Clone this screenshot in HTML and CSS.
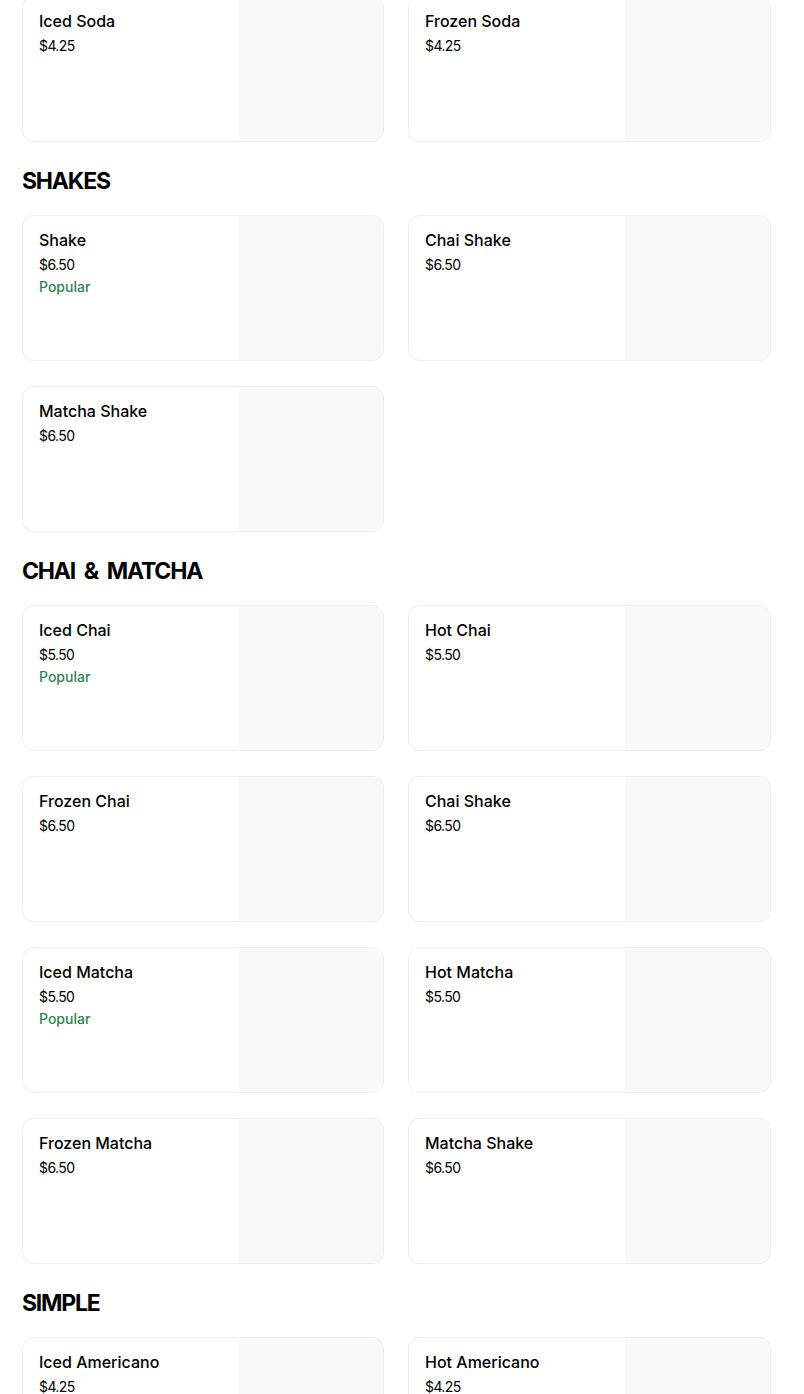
FILE: index.html
```html
<!DOCTYPE html>
<html lang="en">
<head>
<meta charset="utf-8">
<title>Menu</title>
<link rel="stylesheet" href="styles.css">
</head>
<body>
<main class="menu">
  <section class="section">
    <div class="grid">
      <div class="card"><div class="info"><div class="name">Iced Soda</div><div class="price">$4.25</div></div><div class="photo"></div></div>
      <div class="card"><div class="info"><div class="name">Frozen Soda</div><div class="price">$4.25</div></div><div class="photo"></div></div>
    </div>
  </section>
  <section class="section">
    <h2 class="heading">SHAKES</h2>
    <div class="grid">
      <div class="card"><div class="info"><div class="name">Shake</div><div class="price">$6.50</div><div class="tag">Popular</div></div><div class="photo"></div></div>
      <div class="card"><div class="info"><div class="name">Chai Shake</div><div class="price">$6.50</div></div><div class="photo"></div></div>
      <div class="card"><div class="info"><div class="name">Matcha Shake</div><div class="price">$6.50</div></div><div class="photo"></div></div>
    </div>
  </section>
  <section class="section">
    <h2 class="heading">CHAI &amp; MATCHA</h2>
    <div class="grid">
      <div class="card"><div class="info"><div class="name">Iced Chai</div><div class="price">$5.50</div><div class="tag">Popular</div></div><div class="photo"></div></div>
      <div class="card"><div class="info"><div class="name">Hot Chai</div><div class="price">$5.50</div></div><div class="photo"></div></div>
      <div class="card"><div class="info"><div class="name">Frozen Chai</div><div class="price">$6.50</div></div><div class="photo"></div></div>
      <div class="card"><div class="info"><div class="name">Chai Shake</div><div class="price">$6.50</div></div><div class="photo"></div></div>
      <div class="card"><div class="info"><div class="name">Iced Matcha</div><div class="price">$5.50</div><div class="tag">Popular</div></div><div class="photo"></div></div>
      <div class="card"><div class="info"><div class="name">Hot Matcha</div><div class="price">$5.50</div></div><div class="photo"></div></div>
      <div class="card"><div class="info"><div class="name">Frozen Matcha</div><div class="price">$6.50</div></div><div class="photo"></div></div>
      <div class="card"><div class="info"><div class="name">Matcha Shake</div><div class="price">$6.50</div></div><div class="photo"></div></div>
    </div>
  </section>
  <section class="section">
    <h2 class="heading">SIMPLE</h2>
    <div class="grid">
      <div class="card"><div class="info"><div class="name">Iced Americano</div><div class="price">$4.25</div></div><div class="photo"></div></div>
      <div class="card"><div class="info"><div class="name">Hot Americano</div><div class="price">$4.25</div></div><div class="photo"></div></div>
    </div>
  </section>
</main>
</body>
</html>
```
FILE: styles.css
```css
html, body {
  margin: 0;
  padding: 0;
  background: #ffffff;
}
body {
  font-family: "Inter", "Liberation Sans", sans-serif;
  color: #000000;
  overflow: hidden;
}
.menu {
  display: flex;
  flex-direction: column;
  gap: 25px;
  width: 749px;
  margin: -4px 0 0 22px;
}
.heading {
  margin: 0 0 20px;
  font-size: 23px;
  line-height: 28px;
  font-weight: 700;
  letter-spacing: -1.2px;
  word-spacing: 4.5px;
}
.grid {
  display: grid;
  grid-template-columns: 362px 363px;
  column-gap: 24px;
  row-gap: 25px;
}
.card {
  display: flex;
  height: 146px;
  box-sizing: border-box;
  border: 1px solid #efefef;
  border-radius: 12px;
  overflow: hidden;
  background: #ffffff;
  box-shadow: 0 0 1px rgba(0, 0, 0, 0.03);
}
.info {
  flex: 1;
  padding: 14px 16px;
  display: flex;
  flex-direction: column;
}
.name {
  font-size: 16px;
  line-height: 20px;
  font-weight: 500;
  letter-spacing: 0;
}
.price {
  margin-top: 5px;
  font-size: 14px;
  line-height: 20px;
  letter-spacing: -0.6px;
  color: #000000;
}
.tag {
  margin-top: 2px;
  font-size: 14px;
  line-height: 20px;
  font-weight: 500;
  color: #2f8550;
}
.photo {
  width: 145px;
  flex: none;
  background: #f9f9f9;
}
```
